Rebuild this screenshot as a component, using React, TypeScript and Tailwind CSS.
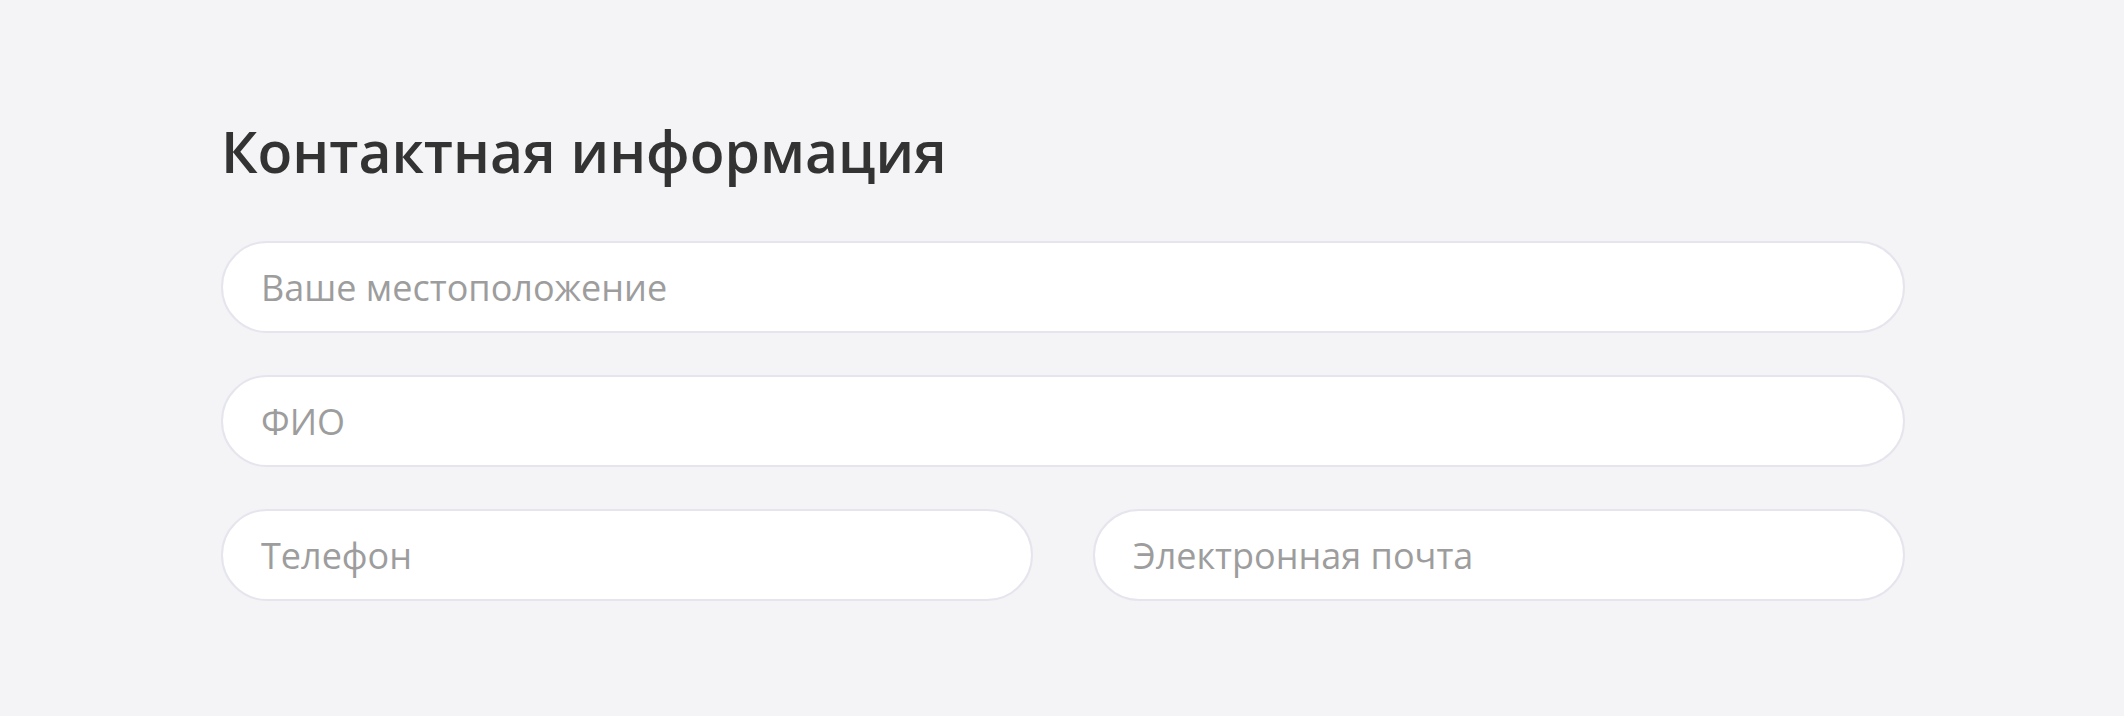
import { useState } from "react";

const fieldClass =
  "h-[92px] w-full rounded-full border-2 border-[#e5e5ed] bg-white pl-[38px] pr-10 text-[36px] text-[#333] outline-none placeholder:text-[#9d9d9d] focus:border-[#c9c9d6]";

export default function App() {
  const [form, setForm] = useState({ location: "", name: "", phone: "", email: "" });
  const update = (key: keyof typeof form) => (e: React.ChangeEvent<HTMLInputElement>) =>
    setForm({ ...form, [key]: e.target.value });

  return (
    <div className="min-h-[716px] w-full bg-[#f4f4f6] font-['Open_Sans',sans-serif]">
      <div className="ml-[221px] w-[1684px] pt-[123px]">
        <h2 className="text-[57px] font-semibold leading-none text-[#333333]">Контактная информация</h2>
        <div className="mt-[61px] flex flex-col gap-[42px]">
          <input type="text" value={form.location} onChange={update("location")} placeholder="Ваше местоположение" className={fieldClass} />
          <input type="text" value={form.name} onChange={update("name")} placeholder="ФИО" className={fieldClass} />
          <div className="grid grid-cols-2 gap-[60px]">
            <input type="tel" value={form.phone} onChange={update("phone")} placeholder="Телефон" className={fieldClass} />
            <input type="email" value={form.email} onChange={update("email")} placeholder="Электронная почта" className={fieldClass} />
          </div>
        </div>
      </div>
    </div>
  );
}
